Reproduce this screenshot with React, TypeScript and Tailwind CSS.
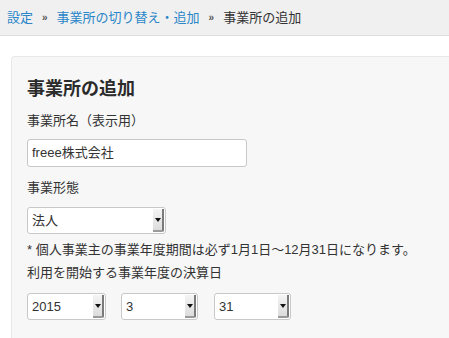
const font = { fontFamily: '"Liberation Sans", "Noto Sans CJK JP", sans-serif' };

type SelectBoxProps = {
	value: string;
	width: string;
};

// 旧式のselect2風ボックス(右側に灰色の矢印ボタン)
const SelectBox = ({ value, width }: SelectBoxProps) => (
	<div className={`flex h-[27px] items-stretch rounded-[3px] border border-[#c8c8c8] bg-white ${width}`}>
		<div className="flex flex-1 items-center pl-[4px] text-[13px] text-[#333]">{value}</div>
		<div className="my-[1px] mr-[1px] flex w-[11px] items-center justify-center rounded-br-[2px] border-r-2 border-b-2 border-r-[#7a7a7a] border-b-[#9a9a9a] bg-gradient-to-b from-[#f4f4f4] to-[#dcdcdc]">
			<div className="h-0 w-0 border-x-[3px] border-t-[4px] border-x-transparent border-t-[#111]" />
		</div>
	</div>
);

export default function App() {
	return (
		<div className="h-[338px] w-[449px] overflow-hidden bg-white text-[#333]" style={font}>
			{/* パンくず */}
			<div className="flex h-[36px] items-center gap-[9px] border-b border-[#dedede] bg-[#f0f0f0] pl-[7px] text-[13px]">
				<span className="text-[#2a86c8]">設定</span>
				<span className="text-[10px] font-bold text-[#555]">»</span>
				<span className="text-[#2a86c8]">事業所の切り替え・追加</span>
				<span className="text-[10px] font-bold text-[#555]">»</span>
				<span className="text-[#333]">事業所の追加</span>
			</div>

			{/* フォームパネル */}
			<div className="ml-[11px] mt-[20px] h-[300px] rounded-tl-[4px] border-t border-l border-[#e8e8e8] bg-[#f7f7f7] pl-[15px] pt-[20px]">
				<h1 className="text-[18px] font-bold leading-[24px] text-[#2b2b2b]">事業所の追加</h1>

				<div className="mt-[10px] text-[13px] leading-[20px]">事業所名（表示用）</div>
				<div className="mt-[8px] flex h-[28px] w-[220px] items-center rounded-[3px] border border-[#c8c8c8] bg-white pl-[4px] text-[13px]">
					freee株式会社
				</div>

				<div className="mt-[11px] text-[13px] leading-[20px]">事業形態</div>
				<div className="mt-[9px]">
					<SelectBox value="法人" width="w-[139px]" />
				</div>

				<div className="mt-[6px] text-[13px] leading-[20px]">* 個人事業主の事業年度期間は必ず1月1日〜12月31日になります。</div>
				<div className="mt-[3px] text-[13px] leading-[20px]">利用を開始する事業年度の決算日</div>

				<div className="mt-[10px] flex">
					<SelectBox value="2015" width="w-[79px]" />
					<div className="ml-[15px]">
						<SelectBox value="3" width="w-[77px]" />
					</div>
					<div className="ml-[16px]">
						<SelectBox value="31" width="w-[77px]" />
					</div>
				</div>
			</div>
		</div>
	);
}
